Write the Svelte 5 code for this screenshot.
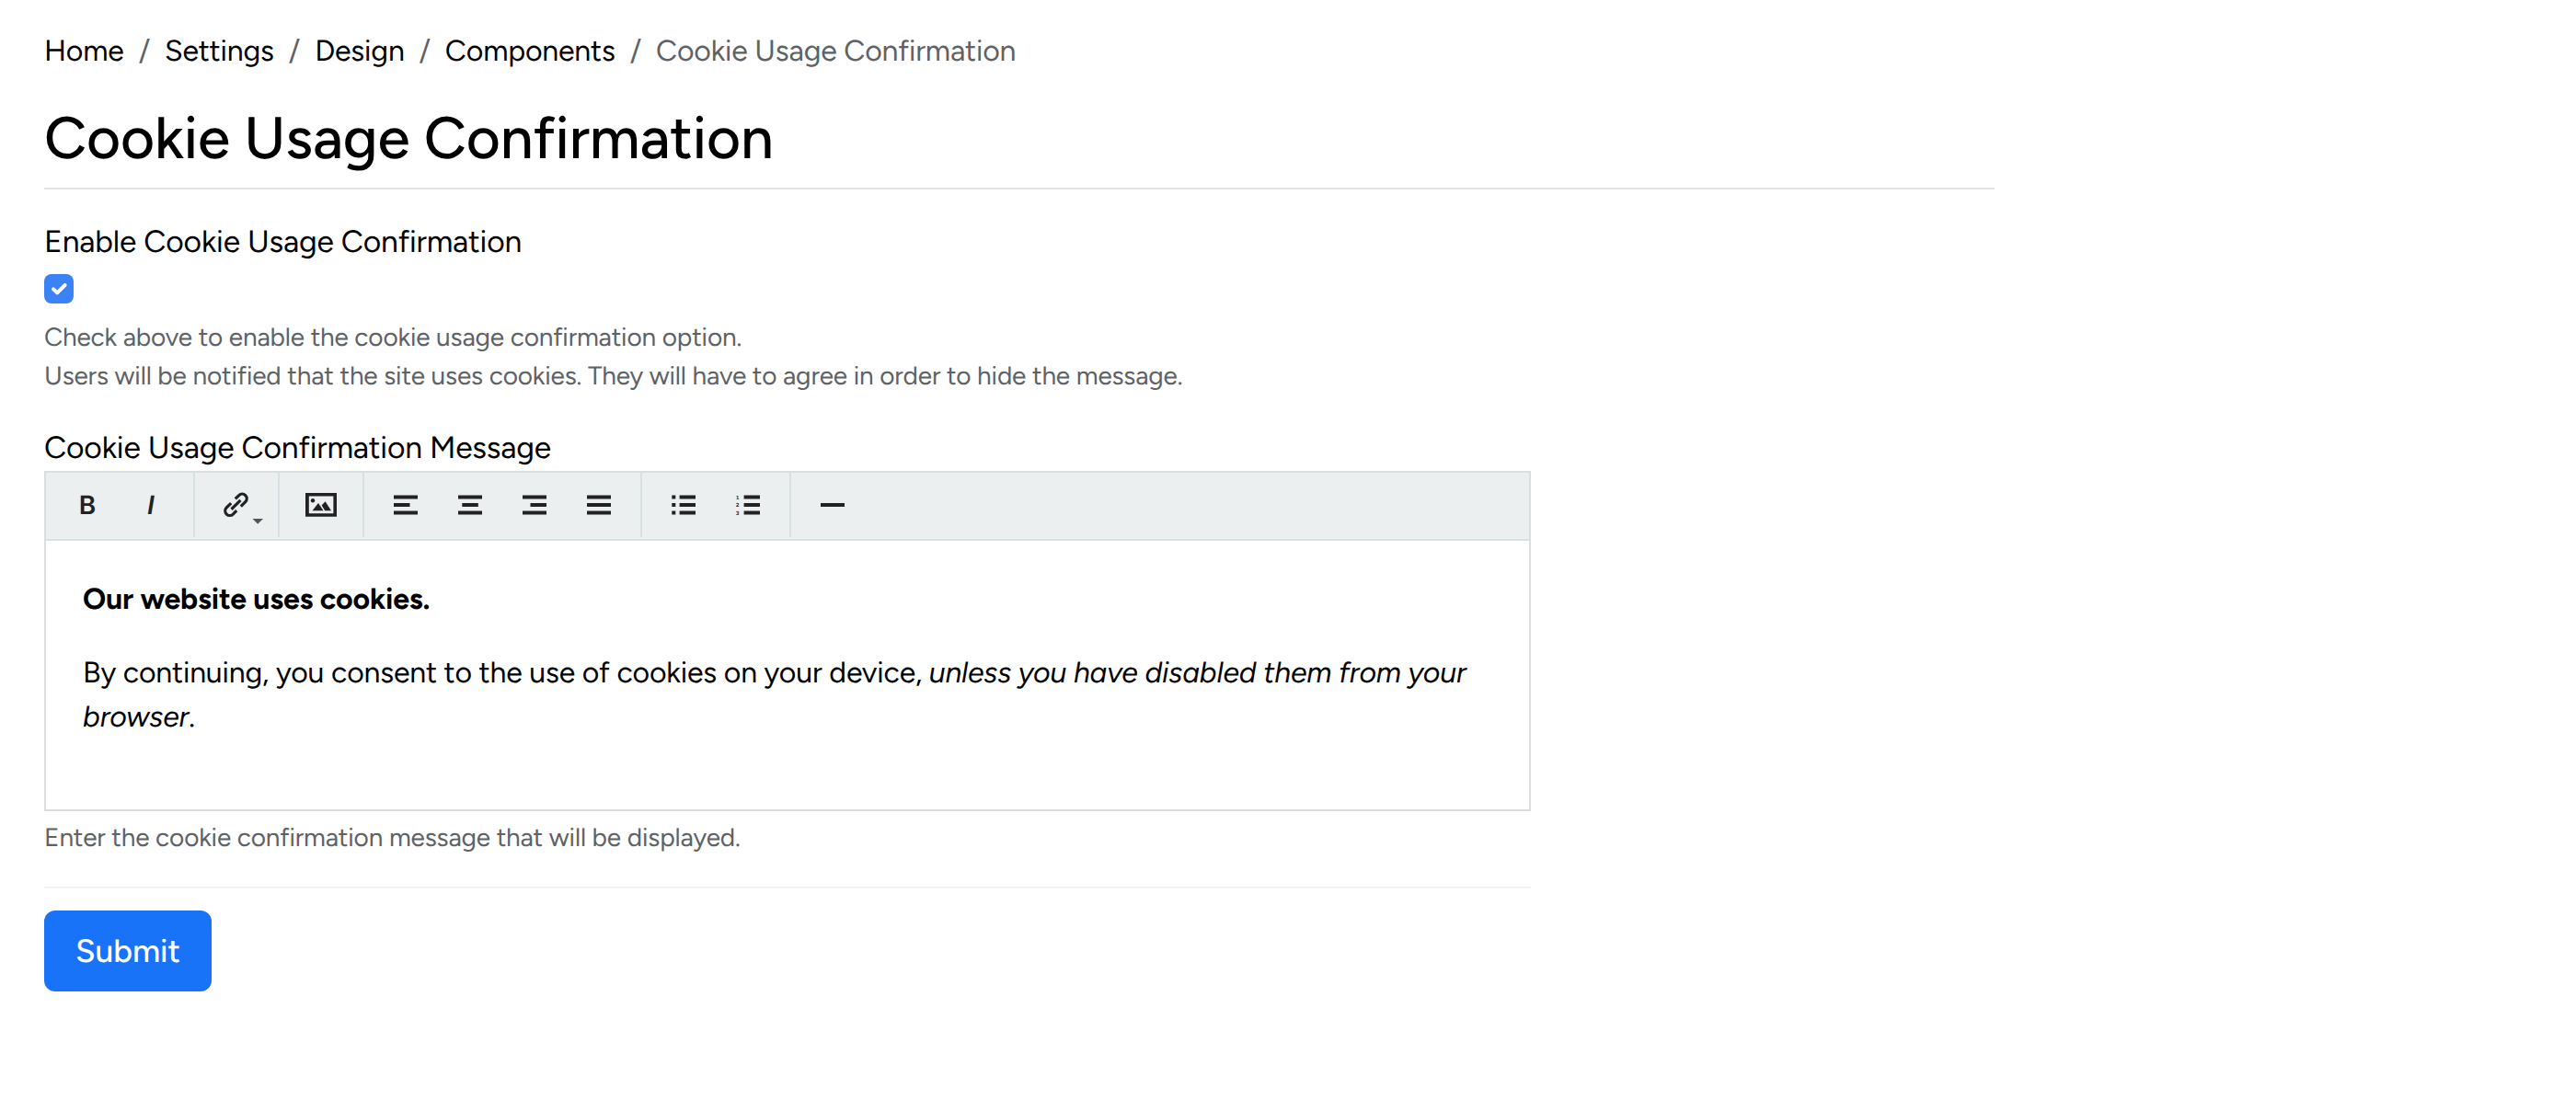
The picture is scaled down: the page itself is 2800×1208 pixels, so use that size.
<script lang="ts">
	let enabled = true;

	const crumbs = ['Home', 'Settings', 'Design', 'Components'];
	const title = 'Cookie Usage Confirmation';
</script>

<main>
	<nav class="breadcrumb" aria-label="breadcrumb">
		{#each crumbs as crumb}
			<a href="#top">{crumb}</a>
			<span class="slash">/</span>
		{/each}
		<span class="current">{title}</span>
	</nav>

	<h1>{title}</h1>

	<form on:submit|preventDefault>
		<label class="label" for="enable">Enable Cookie Usage Confirmation</label>
		<button
			id="enable"
			type="button"
			class="checkbox"
			class:checked={enabled}
			role="checkbox"
			aria-checked={enabled}
			aria-label="Enable Cookie Usage Confirmation"
			on:click={() => (enabled = !enabled)}
		>
			{#if enabled}
				<svg viewBox="0 0 32 32" width="32" height="32" aria-hidden="true">
					<path class="check" d="M10 16.4 L14.2 20.4 L22.6 12" />
				</svg>
			{/if}
		</button>
		<div class="help">
			<p>Check above to enable the cookie usage confirmation option.</p>
			<p>
				Users will be notified that the site uses cookies. They will have to agree in order to hide the
				message.
			</p>
		</div>

		<div class="label message-label">Cookie Usage Confirmation Message</div>
		<div class="editor">
			<div class="toolbar">
				<div class="group">
					<button type="button" class="tool bold">B</button>
					<button type="button" class="tool italic">I</button>
				</div>
				<div class="group">
					<button type="button" class="tool" aria-label="Link">
						<svg viewBox="0 0 70 70">
							<g class="chain" transform="translate(34.5 34.8) rotate(-45)">
								<path d="M-2.5 -5 H-9.5 A5 5 0 0 0 -9.5 5 H-4" />
								<path d="M2.5 5 H9.5 A5 5 0 0 0 9.5 -5 H4" />
								<path d="M-7 0 H7" />
							</g>
							<path class="caret" d="M52.5 50 H64 L58.2 55.8 Z" />
						</svg>
					</button>
				</div>
				<div class="group">
					<button type="button" class="tool" aria-label="Image">
						<svg viewBox="0 0 70 70">
							<path
								fill-rule="evenodd"
								d="M18 22 H52 V47.8 H18 Z M21.8 25.6 V44.2 H48.4 V25.6 Z"
							/>
							<circle cx="26" cy="30.3" r="2.2" />
							<path d="M25.5 41.2 L32 33 L37.5 41.2 Z" />
							<path d="M35.6 35.4 L39.6 31.2 L46 41.2 H39.2 Z" />
						</svg>
					</button>
				</div>
				<div class="group">
					<button type="button" class="tool" aria-label="Align left">
						<svg viewBox="0 0 70 70">
							<path d="M22 24.5h26v4h-26z M22 33h17.5v4h-17.5z M22 41.5h26v4h-26z" />
						</svg>
					</button>
					<button type="button" class="tool" aria-label="Align center">
						<svg viewBox="0 0 70 70">
							<path d="M22 24.5h26v4h-26z M26.3 33h17.5v4h-17.5z M22 41.5h26v4h-26z" />
						</svg>
					</button>
					<button type="button" class="tool" aria-label="Align right">
						<svg viewBox="0 0 70 70">
							<path d="M22 24.5h26v4h-26z M30.5 33h17.5v4h-17.5z M22 41.5h26v4h-26z" />
						</svg>
					</button>
					<button type="button" class="tool" aria-label="Justify">
						<svg viewBox="0 0 70 70">
							<path d="M22 24.5h26v4h-26z M22 33h26v4h-26z M22 41.5h26v4h-26z" />
						</svg>
					</button>
				</div>
				<div class="group">
					<button type="button" class="tool" aria-label="Bulleted list">
						<svg viewBox="0 0 70 70">
							<path d="M22.3 24.5h4v4h-4z M22.3 33h4v4h-4z M22.3 41.5h4v4h-4z" />
							<path d="M30.6 24.5h17.4v4h-17.4z M30.6 33h17.4v4h-17.4z M30.6 41.5h17.4v4h-17.4z" />
						</svg>
					</button>
					<button type="button" class="tool" aria-label="Numbered list">
						<svg viewBox="0 0 70 70">
							<text x="22" y="28.6">1</text>
							<text x="22" y="37.1">2</text>
							<text x="22" y="45.6">3</text>
							<path d="M30.6 24.5h17.4v4h-17.4z M30.6 33h17.4v4h-17.4z M30.6 41.5h17.4v4h-17.4z" />
						</svg>
					</button>
				</div>
				<div class="group last">
					<button type="button" class="tool" aria-label="Horizontal rule">
						<svg viewBox="0 0 70 70">
							<path d="M22 33h26v4h-26z" />
						</svg>
					</button>
				</div>
			</div>
			<div class="content">
				<p><strong>Our website uses cookies.</strong></p>
				<p>
					By continuing, you consent to the use of cookies on your device,
					<em>unless you have disabled them from your</em>
					<br />
					<em>browser</em>.
				</p>
			</div>
		</div>
		<p class="help message-help">Enter the cookie confirmation message that will be displayed.</p>

		<hr />

		<button type="submit" class="submit">Submit</button>
	</form>
</main>

<style>
	:global(body) {
		background: #fff;
	}

	main {
		box-sizing: border-box;
		width: 2216px;
		padding: 31px 48px;
		font-family: Figtree, Lato, sans-serif;
		font-size: 32px;
		line-height: 48px;
		letter-spacing: -0.17px;
		color: #000;
		text-rendering: geometricPrecision;
	}

	p {
		margin: 0;
	}

	button {
		padding: 0;
		border: 0;
		font-family: inherit;
		text-rendering: inherit;
	}

	.breadcrumb {
		display: flex;
		gap: 16px;
		white-space: nowrap;
	}

	.breadcrumb a {
		color: #000;
		text-decoration: none;
	}

	.slash,
	.current {
		color: #5e6266;
	}

	h1 {
		margin: 33px 0 0;
		padding-bottom: 16px;
		border-bottom: 2px solid #e3e4e5;
		font-size: 64px;
		font-weight: 500;
		line-height: 76px;
	}

	form {
		width: 1616px;
		margin-top: 32px;
	}

	.label {
		display: block;
		font-size: 33.6px;
		line-height: 50px;
	}

	.checkbox {
		display: block;
		width: 32px;
		height: 32px;
		margin-top: 10px;
		border-radius: 8px;
		background: #dee2e6;
	}

	.checkbox.checked {
		background: #3b82f6;
	}

	.checkbox svg {
		display: block;
	}

	.check {
		fill: none;
		stroke: #fff;
		stroke-width: 4;
		stroke-linecap: round;
		stroke-linejoin: round;
	}

	.help {
		margin-top: 15px;
		font-size: 28px;
		line-height: 42px;
		color: #5e6266;
	}

	.message-label {
		margin-top: 33px;
	}

	.editor {
		box-sizing: border-box;
		height: 370px;
		border: 2px solid #dcdddd;
	}

	.toolbar {
		display: flex;
		height: 72px;
		border-bottom: 2px solid #d6e1e5;
		background: #ebeff0;
	}

	.group {
		display: flex;
		height: 70px;
		padding: 0 10px;
		border-right: 2px solid #d6e1e5;
	}

	.group.last {
		border-right: 0;
	}

	.tool {
		width: 70px;
		height: 70px;
		background: transparent;
		color: #222;
		font-size: 28px;
		line-height: 70px;
	}

	.tool svg {
		display: block;
		width: 70px;
		height: 70px;
		fill: #222;
	}

	.tool text {
		font: 700 6px 'Liberation Sans', sans-serif;
	}

	.bold,
	.italic {
		font-family: Inter, sans-serif;
		font-weight: 600;
	}

	.italic {
		font-style: italic;
		text-indent: -2px;
	}

	.chain path {
		fill: none;
		stroke: #222;
		stroke-width: 3.2;
	}

	.caret {
		fill: #555;
	}

	.content {
		padding: 39px 40px;
	}

	.content p + p {
		margin-top: 32px;
	}

	.message-help {
		margin-top: 7px;
	}

	hr {
		margin: 33px 0 24px;
		border: 0;
		border-top: 2px solid #f2f3f4;
	}

	.submit {
		width: 182px;
		height: 88px;
		border-radius: 12px;
		background: #1873f8;
		color: #fff;
		font-size: 35.2px;
		font-weight: 500;
	}
</style>
